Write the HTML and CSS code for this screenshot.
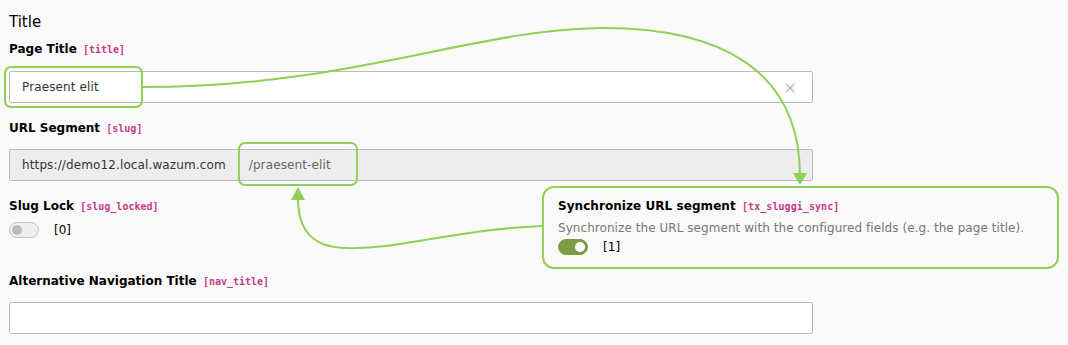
FILE: index.html
```html
<!DOCTYPE html>
<html lang="en">
<head>
    <meta charset="UTF-8">
    <meta name="viewport" content="width=device-width, initial-scale=1.0">
    <title>Page properties</title>
    <link rel="stylesheet" href="styles.css">
</head>
<body>

    <div class="form">
        <!-- Section -->
        <div class="legend">Title</div>

        <div class="field">
            <label class="label">Page Title <code>[title]</code></label>
            <div class="input">
                <span class="value">Praesent elit</span>
                <span class="clear">&times;</span>
            </div>
        </div>

        <div class="field">
            <label class="label">URL Segment <code>[slug]</code></label>
            <div class="input readonly">
                <span class="prefix">https://demo12.local.wazum.com</span>
                <span class="slug">/praesent-elit</span>
            </div>
        </div>

        <div class="field">
            <label class="label">Slug Lock <code>[slug_locked]</code></label>
            <div class="check">
                <span class="toggle"></span>
                <span>[0]</span>
            </div>
        </div>

        <div class="field wide">
            <label class="label">Alternative Navigation Title <code>[nav_title]</code></label>
            <div class="input"></div>
        </div>
    </div>

    <!-- Annotation overlay -->
    <svg class="overlay" width="1068" height="345" viewBox="0 0 1068 345">
        <rect x="5" y="67" width="137" height="40" rx="6" class="mark"></rect>
        <rect x="239" y="143" width="118" height="42" rx="6" class="mark"></rect>
        <path class="mark" d="M143 87 C 350 87, 470 30, 600 28 C 720 27, 800 70, 800 176"></path>
        <polygon class="head" points="793,173 807,173 800,185"></polygon>
        <path class="mark" d="M542 226 C 450 230, 400 250, 345 248 C 312 247, 298 230, 298 198"></path>
        <polygon class="head" points="291,200 305,200 298,187"></polygon>
    </svg>

    <div class="callout">
        <label class="label">Synchronize URL segment <code>[tx_sluggi_sync]</code></label>
        <div class="desc">Synchronize the URL segment with the configured fields (e.g. the page title).</div>
        <div class="check">
            <span class="toggle on"></span>
            <span>[1]</span>
        </div>
    </div>

</body>
</html>
```

FILE: styles.css
```css
body {
    font-family: "DejaVu Sans", Verdana, sans-serif;
    background-color: #fafafa;
    color: #000;
    margin: 0;
    font-size: 12px;
}

.form {
    padding: 12px 0 0 9px;
    width: 804px;
}

.legend {
    font-size: 15px;
    line-height: 20px;
    margin-bottom: 9px;
}

.field {
    margin-bottom: 17px;
}

.field.wide {
    margin-top: 35px;
}

.label {
    display: block;
    font-weight: bold;
    line-height: 16px;
    height: 16px;
    margin-bottom: 14px;
}

.label code {
    font-family: "DejaVu Sans Mono", monospace;
    font-size: 10px;
    line-height: 1;
    font-weight: bold;
    color: #c93b8a;
    margin-left: 2px;
}

.input {
    box-sizing: border-box;
    height: 32px;
    background-color: #fff;
    border: 1px solid #bbb;
    border-radius: 2px;
    display: flex;
    align-items: center;
    padding: 0 12px;
    color: #333;
    letter-spacing: 0.12px;
}

.input .value {
    flex: 1;
}

.input .clear {
    color: #bbb;
    font-size: 16px;
    margin-right: 3px;
}

.input.readonly {
    background-color: #ededed;
}

.input .prefix {
    margin-right: 23px;
}

.input .slug {
    color: #666;
}

.field:nth-child(3) .label {
    margin-bottom: 13px;
}

.field:nth-child(4) .label {
    margin-bottom: 8px;
}

.wide .label {
    margin-bottom: 13px;
}

.check {
    display: flex;
    align-items: center;
    gap: 15px;
    height: 16px;
}

.toggle {
    box-sizing: border-box;
    width: 30px;
    height: 16px;
    border: 1px solid #c4c4c4;
    border-radius: 8px;
    background-color: #eee;
    position: relative;
}

.toggle::after {
    content: "";
    position: absolute;
    left: 2px;
    top: 2px;
    width: 10px;
    height: 10px;
    border-radius: 50%;
    background-color: #bbb;
}

.toggle.on {
    background-color: #7c9c48;
    border-color: #7c9c48;
}

.toggle.on::after {
    left: auto;
    right: 2px;
    background-color: #fff;
}

.overlay {
    position: absolute;
    left: 0;
    top: 0;
    pointer-events: none;
}

.mark {
    fill: none;
    stroke: #8ed158;
    stroke-width: 2;
}

.head {
    fill: #8ed158;
}

.callout {
    position: absolute;
    left: 542px;
    top: 186px;
    box-sizing: border-box;
    width: 517px;
    height: 83px;
    border: 2px solid #8ed158;
    border-radius: 12px;
    background-color: #fafafa;
    padding: 10px 0 0 14px;
    letter-spacing: 0.06px;
}

.callout .label {
    margin-bottom: 6px;
}

.callout .desc {
    color: #777;
    line-height: 16px;
    margin-bottom: 3px;
}
```
